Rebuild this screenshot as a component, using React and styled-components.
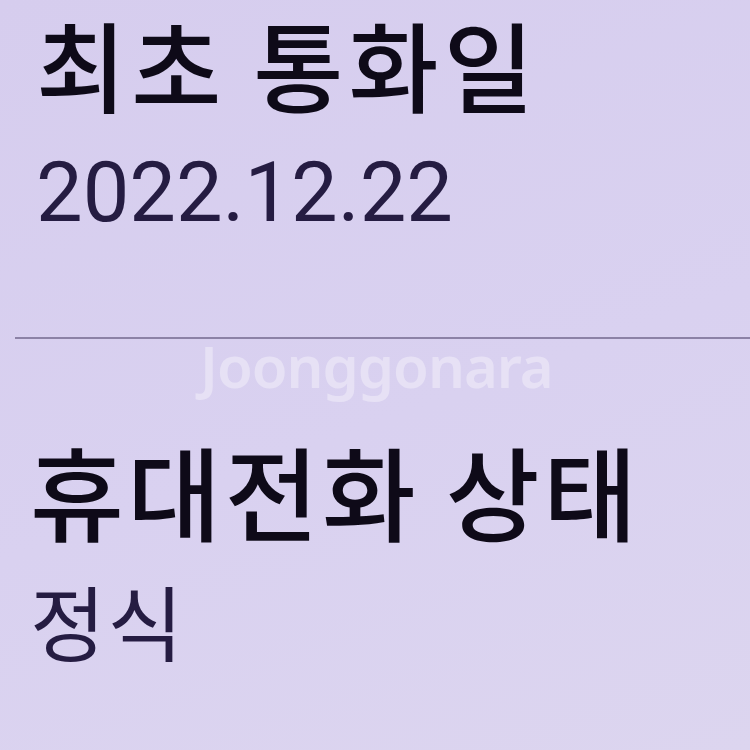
import React from 'react'
import styled, {createGlobalStyle} from 'styled-components'

const Global = createGlobalStyle`
  html, body {
    margin: 0;
    padding: 0;
  }
  body {
    background: #d8cfee;
    font-family: "Noto Sans CJK KR", "Noto Sans", sans-serif;
  }
`

const Screen = styled.div`
  position: relative;
  width: 750px;
  height: 750px;
  overflow: hidden;
  background: linear-gradient(160deg, #d6cdee 0%, #d9d1f0 55%, #dcd5ef 100%);
  display: flex;
  flex-direction: column;
`

const Section = styled.div`
  display: flex;
  flex-direction: column;
  padding: ${props => props.pad || '0 0 0 38px'};
`

const Label = styled.div`
  font-family: "Noto Sans CJK KR", sans-serif;
  font-size: ${props => props.size}px;
  font-weight: 500;
  line-height: 1.1;
  color: #0e0a18;
  letter-spacing: ${props => props.spacing || 0}px;
  white-space: nowrap;
`

const Value = styled.div`
  font-family: ${props => props.latin ? 'Roboto, "Noto Sans CJK KR", sans-serif' : '"Noto Sans CJK KR", sans-serif'};
  font-size: ${props => props.size}px;
  font-weight: 400;
  line-height: 1.1;
  color: #251c42;
  letter-spacing: ${props => props.spacing || 0}px;
  margin-top: ${props => props.gap}px;
  white-space: nowrap;
`

const Divider = styled.div`
  height: 2px;
  margin: ${props => props.margin};
  background: #8c82a6;
`

const Watermark = styled.div`
  position: absolute;
  left: 200px;
  top: 326px;
  font-family: "Noto Sans", sans-serif;
  font-size: 58px;
  font-weight: 600;
  letter-spacing: -1px;
  color: rgba(255, 255, 255, 0.36);
  pointer-events: none;
`

export default function App() {
  return (
    <>
      <Global />
      <Screen>
        <Section pad="9px 0 0 36px">
          <Label size={98} spacing={5}>최초 통화일</Label>
          <Value latin size={83} gap={30}>2022.12.22</Value>
        </Section>
        <Divider margin="99px 0 0 15px" />
        <Section pad="95px 0 0 30px">
          <Label size={102} spacing={3.5}>휴대전화 상태</Label>
          <Value size={82} spacing={2} gap={29}>정식</Value>
        </Section>
        <Watermark>Joonggonara</Watermark>
      </Screen>
    </>
  )
}
